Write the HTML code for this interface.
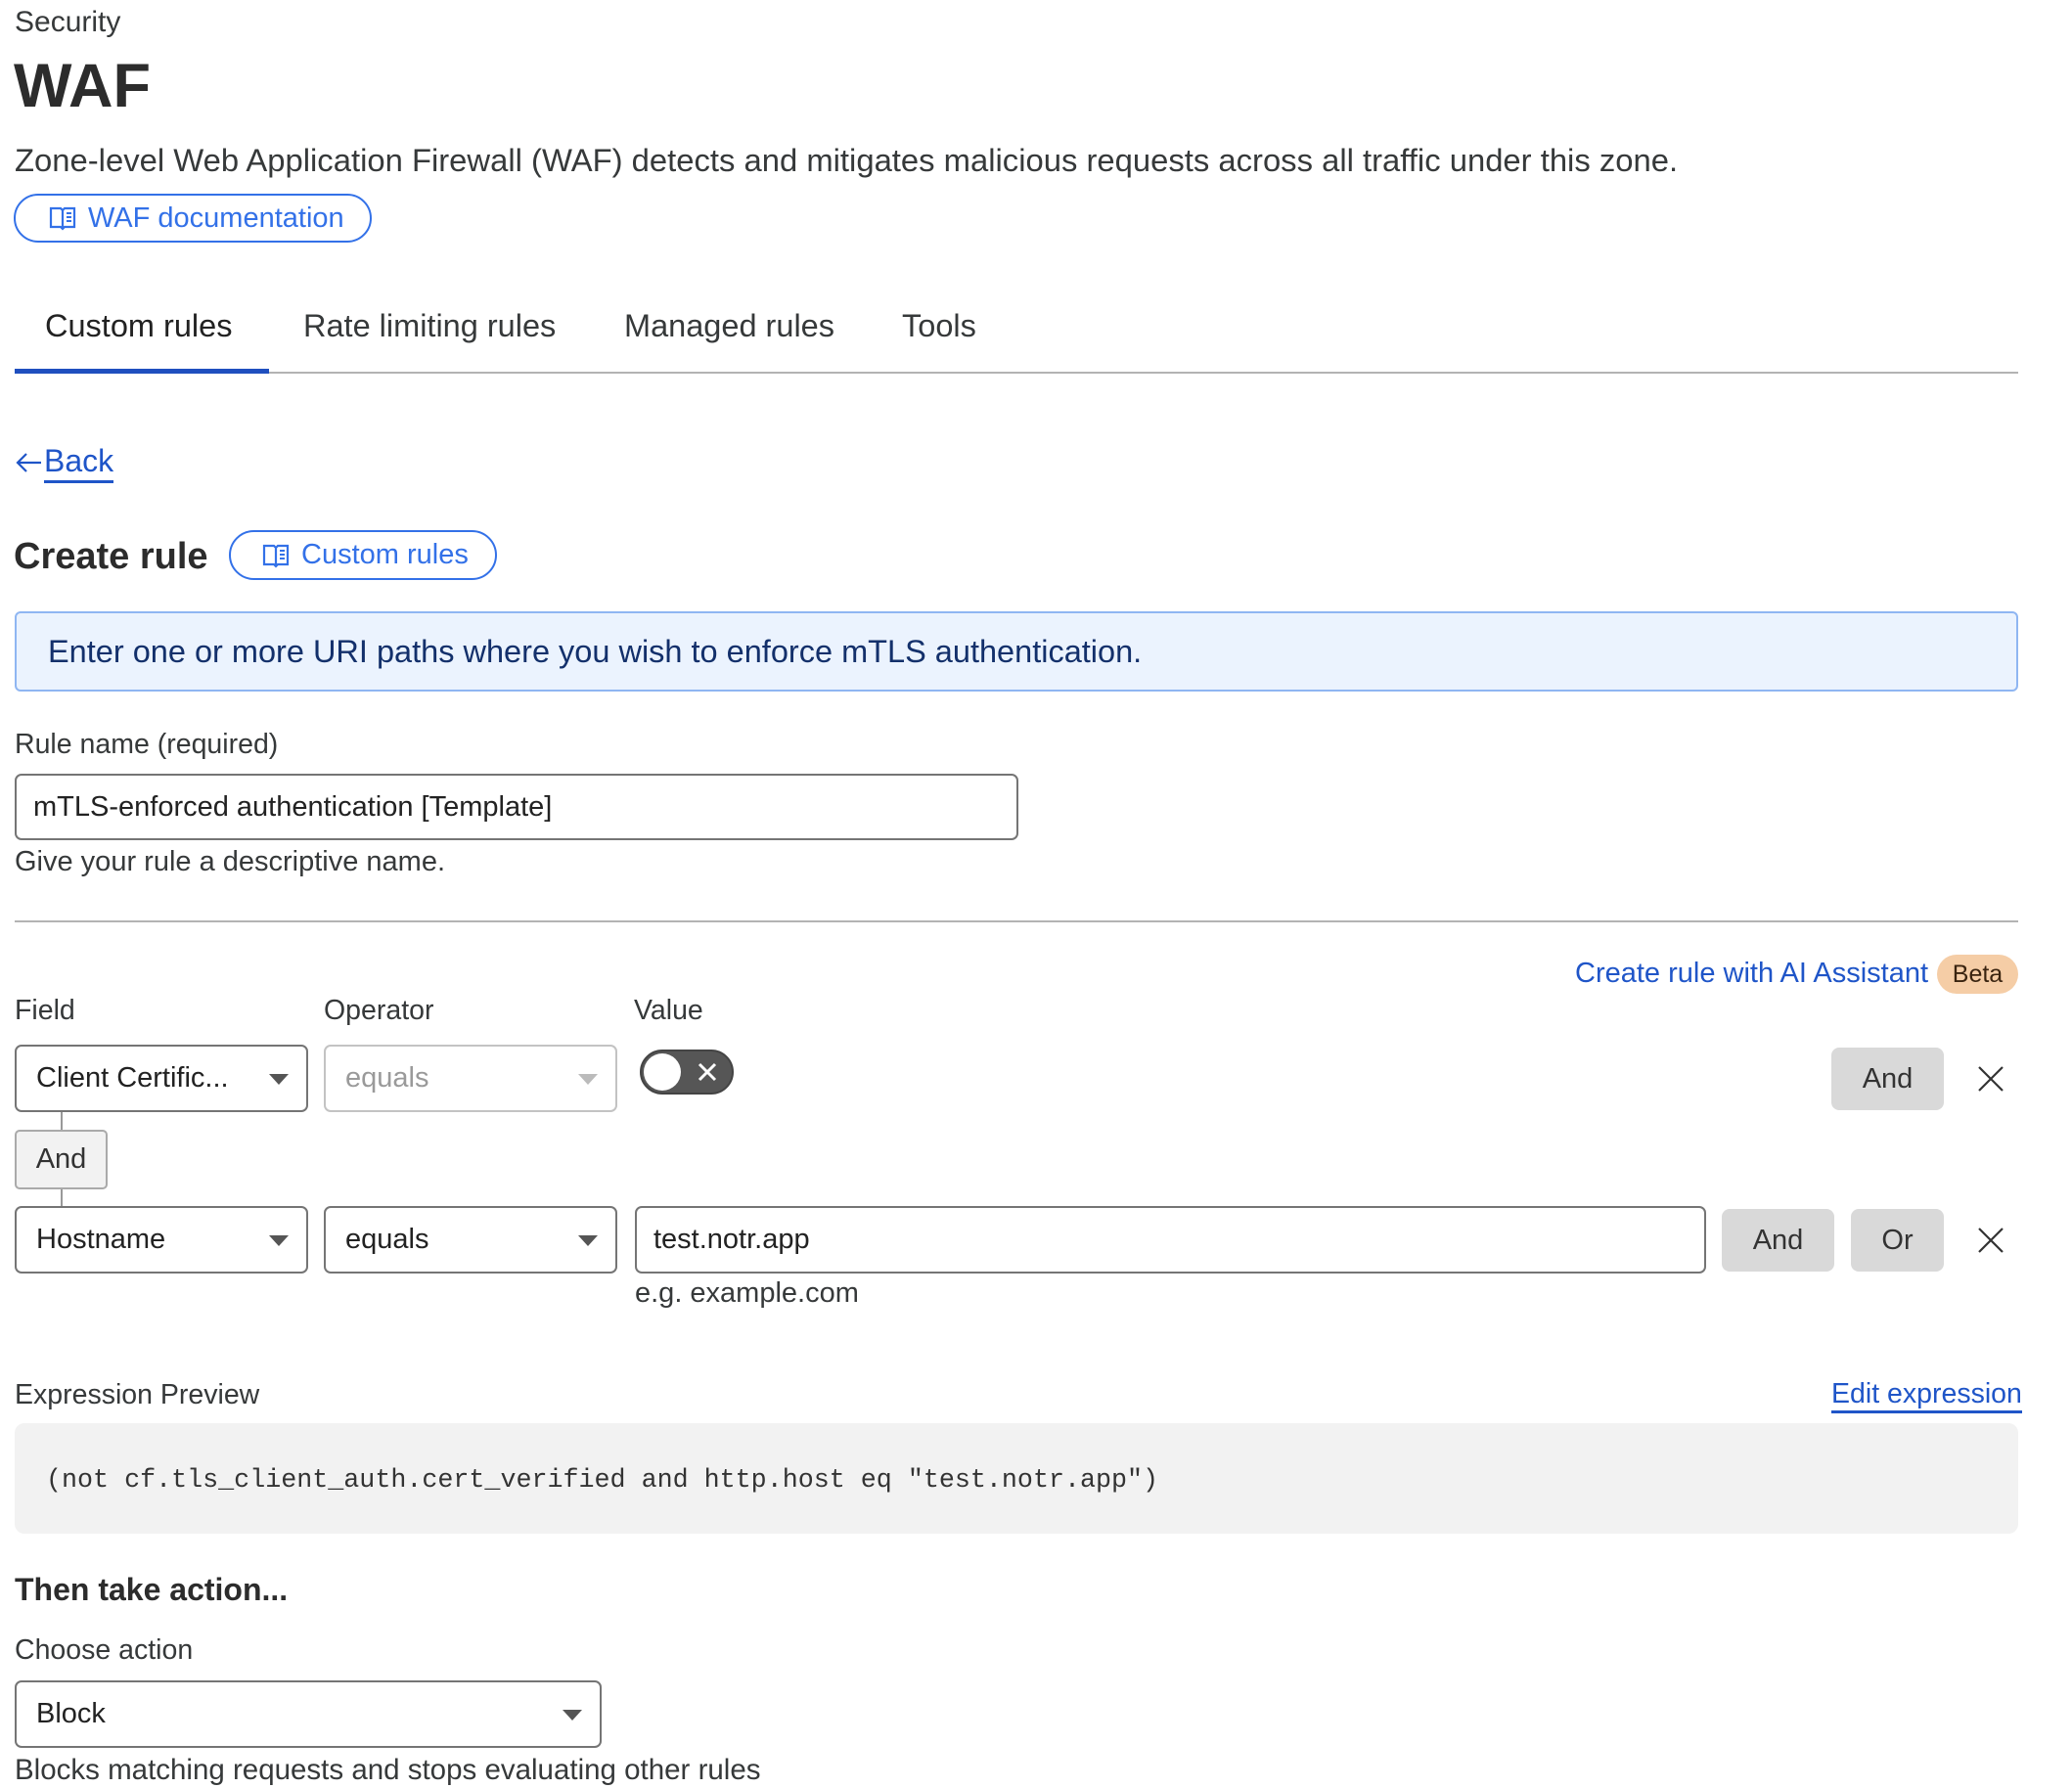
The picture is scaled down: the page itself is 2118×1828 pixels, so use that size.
<!DOCTYPE html>
<html><head><meta charset="utf-8"><style>
*{box-sizing:border-box;margin:0;padding:0}
body{width:2118px;height:1828px;background:#fff;font-family:"Liberation Sans",sans-serif;color:#36393a;position:relative;overflow:hidden}
.a{position:absolute;white-space:nowrap}
.blue{color:#1f55c8}
.pill{position:absolute;border:2.5px solid #3371e8;border-radius:30px;color:#3371e8;font-size:29px;display:flex;align-items:center}
.sel{position:absolute;border:2px solid #757575;border-radius:7px;font-size:29px;display:flex;align-items:center;padding-left:20px;color:#222}
.sel .car{position:absolute;right:18px;top:50%;margin-top:-5px;width:0;height:0;border-left:10px solid transparent;border-right:10px solid transparent;border-top:11px solid #555}
.btn{position:absolute;background:#d9d9d9;border-radius:8px;font-size:29px;display:flex;align-items:center;justify-content:center;color:#333}
</style></head><body>
<div class="a" style="left:15px;top:6px;font-size:30px;line-height:34px">Security</div>
<div class="a" style="left:14px;top:50px;font-size:63px;font-weight:bold;line-height:76px;color:#2c2c2c">WAF</div>
<div class="a" style="left:15px;top:145px;font-size:32.8px;line-height:38px">Zone-level Web Application Firewall (WAF) detects and mitigates malicious requests across all traffic under this zone.</div>
<div class="pill" style="left:14px;top:198px;width:366px;height:50px;padding-left:34px">
<svg width="28" height="26" viewBox="0 0 28 26" style="margin-right:12px"><path d="M2 3h10l2 2 2-2h10v19H16l-2 2-2-2H2z M14 5v19" fill="none" stroke="#3371e8" stroke-width="2.2"/><path d="M18 8h5M18 12h5M18 16h5" stroke="#3371e8" stroke-width="2"/></svg>WAF documentation</div>
<div class="a" style="left:46px;top:315px;font-size:32.5px;line-height:36px;color:#222">Custom rules</div>
<div class="a" style="left:310px;top:315px;font-size:32.5px;line-height:36px">Rate limiting rules</div>
<div class="a" style="left:638px;top:315px;font-size:32.5px;line-height:36px">Managed rules</div>
<div class="a" style="left:922px;top:315px;font-size:32.5px;line-height:36px">Tools</div>
<div class="a" style="left:15px;top:380px;width:2048px;height:2px;background:#b3b3b3"></div>
<div class="a" style="left:15px;top:377px;width:260px;height:5px;background:#1f4fbf"></div>
<div class="a blue" style="left:15px;top:453px;font-size:32px;line-height:36px">
<svg width="30" height="24" viewBox="0 0 30 24" style="vertical-align:-3px"><path d="M27 12H3M12 3L3 12l9 9" fill="none" stroke="#1f55c8" stroke-width="2.2"/></svg><span style="border-bottom:3px solid #1f55c8;padding-bottom:2px">Back</span></div>
<div class="a" style="left:14px;top:546px;font-size:38px;font-weight:bold;line-height:46px;color:#2c2c2c">Create rule</div>
<div class="pill" style="left:234px;top:542px;width:274px;height:51px;padding-left:32px">
<svg width="28" height="26" viewBox="0 0 28 26" style="margin-right:12px"><path d="M2 3h10l2 2 2-2h10v19H16l-2 2-2-2H2z M14 5v19" fill="none" stroke="#3371e8" stroke-width="2.2"/><path d="M18 8h5M18 12h5M18 16h5" stroke="#3371e8" stroke-width="2"/></svg>Custom rules</div>
<div class="a" style="left:15px;top:625px;width:2048px;height:82px;background:#ebf3fe;border:2px solid #8fb6f2;border-radius:6px"></div>
<div class="a" style="left:49px;top:647px;font-size:32.5px;line-height:38px;color:#13306b">Enter one or more URI paths where you wish to enforce mTLS authentication.</div>
<div class="a" style="left:15px;top:744px;font-size:28.5px;line-height:34px">Rule name (required)</div>
<div class="sel" style="left:15px;top:791px;width:1026px;height:68px;padding-left:17px">mTLS-enforced authentication [Template]</div>
<div class="a" style="left:15px;top:864px;font-size:29px;line-height:34px">Give your rule a descriptive name.</div>
<div class="a" style="left:15px;top:941px;width:2048px;height:2px;background:#b3b3b3"></div>
<div class="a blue" style="left:1610px;top:977px;font-size:29px;line-height:36px">Create rule with AI Assistant</div>
<div class="a" style="left:1980px;top:976px;width:83px;height:40px;background:#f5cda6;border-radius:20px;font-size:25px;line-height:40px;text-align:center;color:#3a2410">Beta</div>
<div class="a" style="left:15px;top:1016px;font-size:28.5px;line-height:34px">Field</div>
<div class="a" style="left:331px;top:1016px;font-size:28.5px;line-height:34px">Operator</div>
<div class="a" style="left:648px;top:1016px;font-size:28.5px;line-height:34px">Value</div>
<div class="sel" style="left:15px;top:1068px;width:300px;height:69px">Client Certific...<span class="car"></span></div>
<div class="sel" style="left:331px;top:1068px;width:300px;height:69px;border-color:#c3c3c3;color:#9a9a9a">equals<span class="car" style="border-top-color:#bbb"></span></div>
<div class="a" style="left:654px;top:1073px;width:96px;height:46px;background:#565656;border:2.5px solid #444;border-radius:23px"></div>
<div class="a" style="left:658px;top:1077px;width:38px;height:38px;background:#fff;border-radius:50%"></div>
<svg class="a" style="left:712px;top:1085px" width="22" height="22" viewBox="0 0 22 22"><path d="M3 3l16 16M19 3L3 19" stroke="#fff" stroke-width="3"/></svg>
<div class="btn" style="left:1872px;top:1071px;width:115px;height:64px">And</div>
<svg class="a" style="left:2022px;top:1090px" width="26" height="26" viewBox="0 0 26 26"><path d="M1 1l24 24M25 1L1 25" stroke="#333" stroke-width="2.2"/></svg>
<div class="a" style="left:62px;top:1137px;width:2px;height:97px;background:#999"></div>
<div class="a" style="left:15px;top:1155px;width:95px;height:61px;background:#f2f2f2;border:2px solid #aaa;border-radius:5px;font-size:29px;line-height:57px;text-align:center;color:#333">And</div>
<div class="sel" style="left:15px;top:1233px;width:300px;height:69px">Hostname<span class="car"></span></div>
<div class="sel" style="left:331px;top:1233px;width:300px;height:69px">equals<span class="car"></span></div>
<div class="sel" style="left:649px;top:1233px;width:1095px;height:69px;padding-left:17px">test.notr.app</div>
<div class="btn" style="left:1760px;top:1236px;width:115px;height:64px">And</div>
<div class="btn" style="left:1892px;top:1236px;width:95px;height:64px">Or</div>
<svg class="a" style="left:2022px;top:1255px" width="26" height="26" viewBox="0 0 26 26"><path d="M1 1l24 24M25 1L1 25" stroke="#333" stroke-width="2.2"/></svg>
<div class="a" style="left:649px;top:1305px;font-size:29px;line-height:34px">e.g. example.com</div>
<div class="a" style="left:15px;top:1409px;font-size:28.5px;line-height:34px">Expression Preview</div>
<div class="a blue" style="left:1872px;top:1408px;font-size:28.5px;line-height:34px;border-bottom:3px solid #1f55c8">Edit expression</div>
<div class="a" style="left:15px;top:1455px;width:2048px;height:113px;background:#f2f2f2;border-radius:10px"></div>
<div class="a" style="left:47px;top:1497px;font-family:'Liberation Mono',monospace;font-size:26.7px;line-height:34px;color:#333">(not cf.tls_client_auth.cert_verified and http.host eq "test.notr.app")</div>
<div class="a" style="left:15px;top:1606px;font-size:32px;font-weight:bold;line-height:38px;color:#2c2c2c">Then take action...</div>
<div class="a" style="left:15px;top:1670px;font-size:28.5px;line-height:34px">Choose action</div>
<div class="sel" style="left:15px;top:1718px;width:600px;height:69px">Block<span class="car"></span></div>
<div class="a" style="left:15px;top:1793px;font-size:29.5px;line-height:34px">Blocks matching requests and stops evaluating other rules</div>
</body></html>
